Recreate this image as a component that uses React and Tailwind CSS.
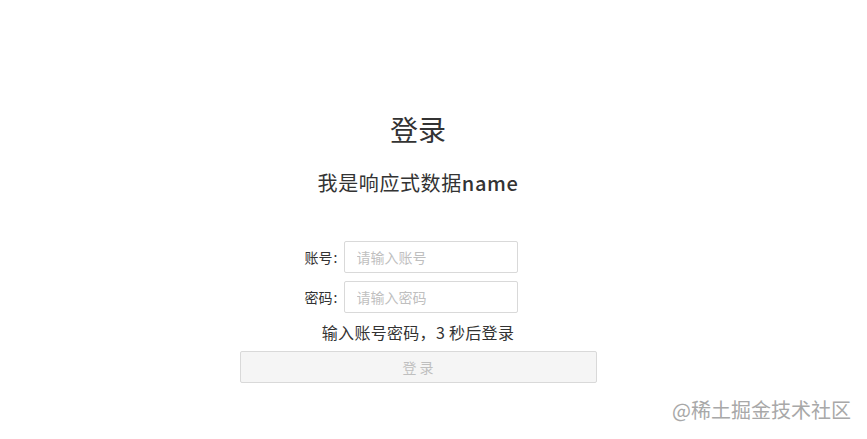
import React, { useState } from 'react';

const font = { fontFamily: '"Noto Sans CJK SC", "Noto Sans", sans-serif' };

const Field = ({ label, placeholder, type, value, onChange }) => (
  <div className="flex items-center h-8">
    <div className="w-[104px] flex justify-end pr-[6px] text-[14px] text-[#333]">
      <span>{label}</span>
      <span className="ml-[1px]">:</span>
    </div>
    <input
      type={type}
      value={value}
      onChange={(e) => onChange(e.target.value)}
      placeholder={placeholder}
      className="w-[174px] h-8 px-3 text-[14px] border border-[#d9d9d9] rounded-[2px] outline-none placeholder:text-[#bfbfbf] text-[#333]"
    />
  </div>
);

export default function App() {
  const [account, setAccount] = useState('');
  const [password, setPassword] = useState('');

  return (
    <div className="relative w-[867px] h-[439px] bg-white overflow-hidden" style={font}>
      <div className="w-[836px] flex flex-col items-center pt-[109px] text-[#333]">
        <h1 className="text-[28px] leading-[40px] font-normal">登录</h1>
        <h2 className="mt-5 text-[20px] leading-[28px] font-normal tracking-[0.6px]">
          我是响应式数据<span className="font-medium">name</span>
        </h2>

        <div className="mt-[44px] w-[357px] flex flex-col gap-2">
          <Field label="账号" placeholder="请输入账号" type="text" value={account} onChange={setAccount} />
          <Field label="密码" placeholder="请输入密码" type="password" value={password} onChange={setPassword} />
        </div>

        <p className="mt-[7px] text-[16px] leading-[24px] tracking-[0.3px]">输入账号密码，3 秒后登录</p>

        <button
          disabled
          className="mt-[7px] w-[357px] h-8 bg-[#f5f5f5] border border-[#d9d9d9] rounded-[2px] text-[14px] text-[#bfbfbf]"
        >
          登 录
        </button>
      </div>

      {/* watermark */}
      <div className="absolute right-[16px] bottom-[17px] text-[20px] leading-[24px] text-[#a8a8a8]">
        @稀土掘金技术社区
      </div>
    </div>
  );
}
